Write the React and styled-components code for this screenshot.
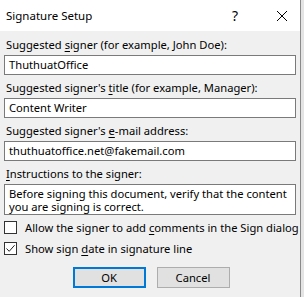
import React from 'react';
import styled, { createGlobalStyle } from 'styled-components';

const GlobalStyle = createGlobalStyle`
    html, body {
        margin: 0;
        padding: 0;
        background: #e4e4e4;
    }
    body {
        font-family: "Noto Sans", "Open Sans", sans-serif;
        font-size: 11.2px;
        color: #000;
    }
`;

const Page = styled.div`
    display: flex;
    width: 304px;
    height: 297px;
    overflow: hidden;
`;

const Dialog = styled.div`
    width: 301px;
    height: 297px;
    background: #f0f0f0;
    border-right: 1px solid #8a8a8a;
    box-sizing: border-box;
    display: flex;
    flex-direction: column;
`;

const TitleBar = styled.div`
    height: 31px;
    background: #fff;
    display: flex;
    align-items: center;
    padding-left: 6px;
`;

const Title = styled.div`
    flex: 1;
    font-size: 11.5px;
`;

const TitleButton = styled.div`
    width: ${p => p.$w}px;
    margin-left: ${p => p.$gap || 0}px;
    height: 31px;
    display: flex;
    align-items: center;
    justify-content: center;
    font-size: 14px;
`;

const Body = styled.div`
    display: flex;
    flex-direction: column;
    padding: 5px 4px 0 4px;
`;

const Label = styled.div`
    padding-left: 2px;
    height: 17px;
    line-height: 17px;
    white-space: nowrap;
`;

const Key = styled.span`
    text-decoration: underline;
    text-underline-offset: 2px;
`;

const Field = styled.div`
    height: 20px;
    box-sizing: border-box;
    border: 1px solid #7a7a7a;
    background: #fff;
    padding: 0 4px;
    line-height: 18px;
    margin-bottom: 4px;
    margin-top: 2px;
    white-space: nowrap;
`;

const Area = styled(Field)`
    height: 31px;
    line-height: 13px;
    padding-top: 2px;
    white-space: normal;
`;

const CheckRow = styled.label`
    display: flex;
    align-items: center;
    gap: 8px;
    height: 19px;
    margin-top: ${p => p.$top || 0}px;
    white-space: nowrap;
`;

const Box = styled.span`
    width: 13px;
    height: 13px;
    box-sizing: border-box;
    border: 1px solid #333;
    background: #fff;
    display: flex;
    align-items: center;
    justify-content: center;
    flex: none;
`;

const Buttons = styled.div`
    display: flex;
    justify-content: center;
    gap: 11px;
    margin-top: 9px;
    padding-left: 2px;
`;

const Button = styled.div`
    width: 73px;
    height: 21px;
    box-sizing: border-box;
    background: #e1e1e1;
    border: ${p => p.$primary ? '2px solid #0078d7' : '1px solid #adadad'};
    display: flex;
    align-items: center;
    justify-content: center;
`;

function Check() {
    return (
        <svg width="11" height="11" viewBox="0 0 11 11">
            <path d="M1.5 5.5 L4.2 8.3 L9.6 2.2" fill="none" stroke="#222" strokeWidth="1" />
        </svg>
    );
}

function Close() {
    return (
        <svg width="12" height="12" viewBox="0 0 12 12">
            <path d="M1 1 L11 11 M11 1 L1 11" stroke="#000" strokeWidth="1" />
        </svg>
    );
}

export default function App() {
    return (
        <Page>
            <GlobalStyle />
            <Dialog>
                <TitleBar>
                    <Title>Signature Setup</Title>
                    <TitleButton $w={34}>?</TitleButton>
                    <TitleButton $w={36} $gap={12}><Close /></TitleButton>
                </TitleBar>
                <Body>
                    <Label>Suggested <Key>s</Key>igner (for example, John Doe):</Label>
                    <Field>ThuthuatOffice</Field>
                    <Label>Suggested signer's <Key>t</Key>itle (for example, Manager):</Label>
                    <Field>Content Writer</Field>
                    <Label>Suggested signer's <Key>e</Key>-mail address:</Label>
                    <Field>thuthuatoffice.net@fakemail.com</Field>
                    <Label><Key>I</Key>nstructions to the signer:</Label>
                    <Area>Before signing this document, verify that the content you are signing is correct.</Area>
                    <CheckRow $top={-1}>
                        <Box />
                        <span>Allow the signer to add <Key>c</Key>omments in the Sign dialog</span>
                    </CheckRow>
                    <CheckRow $top={2}>
                        <Box><Check /></Box>
                        <span>Show sign <Key>d</Key>ate in signature line</span>
                    </CheckRow>
                    <Buttons>
                        <Button $primary>OK</Button>
                        <Button>Cancel</Button>
                    </Buttons>
                </Body>
            </Dialog>
        </Page>
    );
}
